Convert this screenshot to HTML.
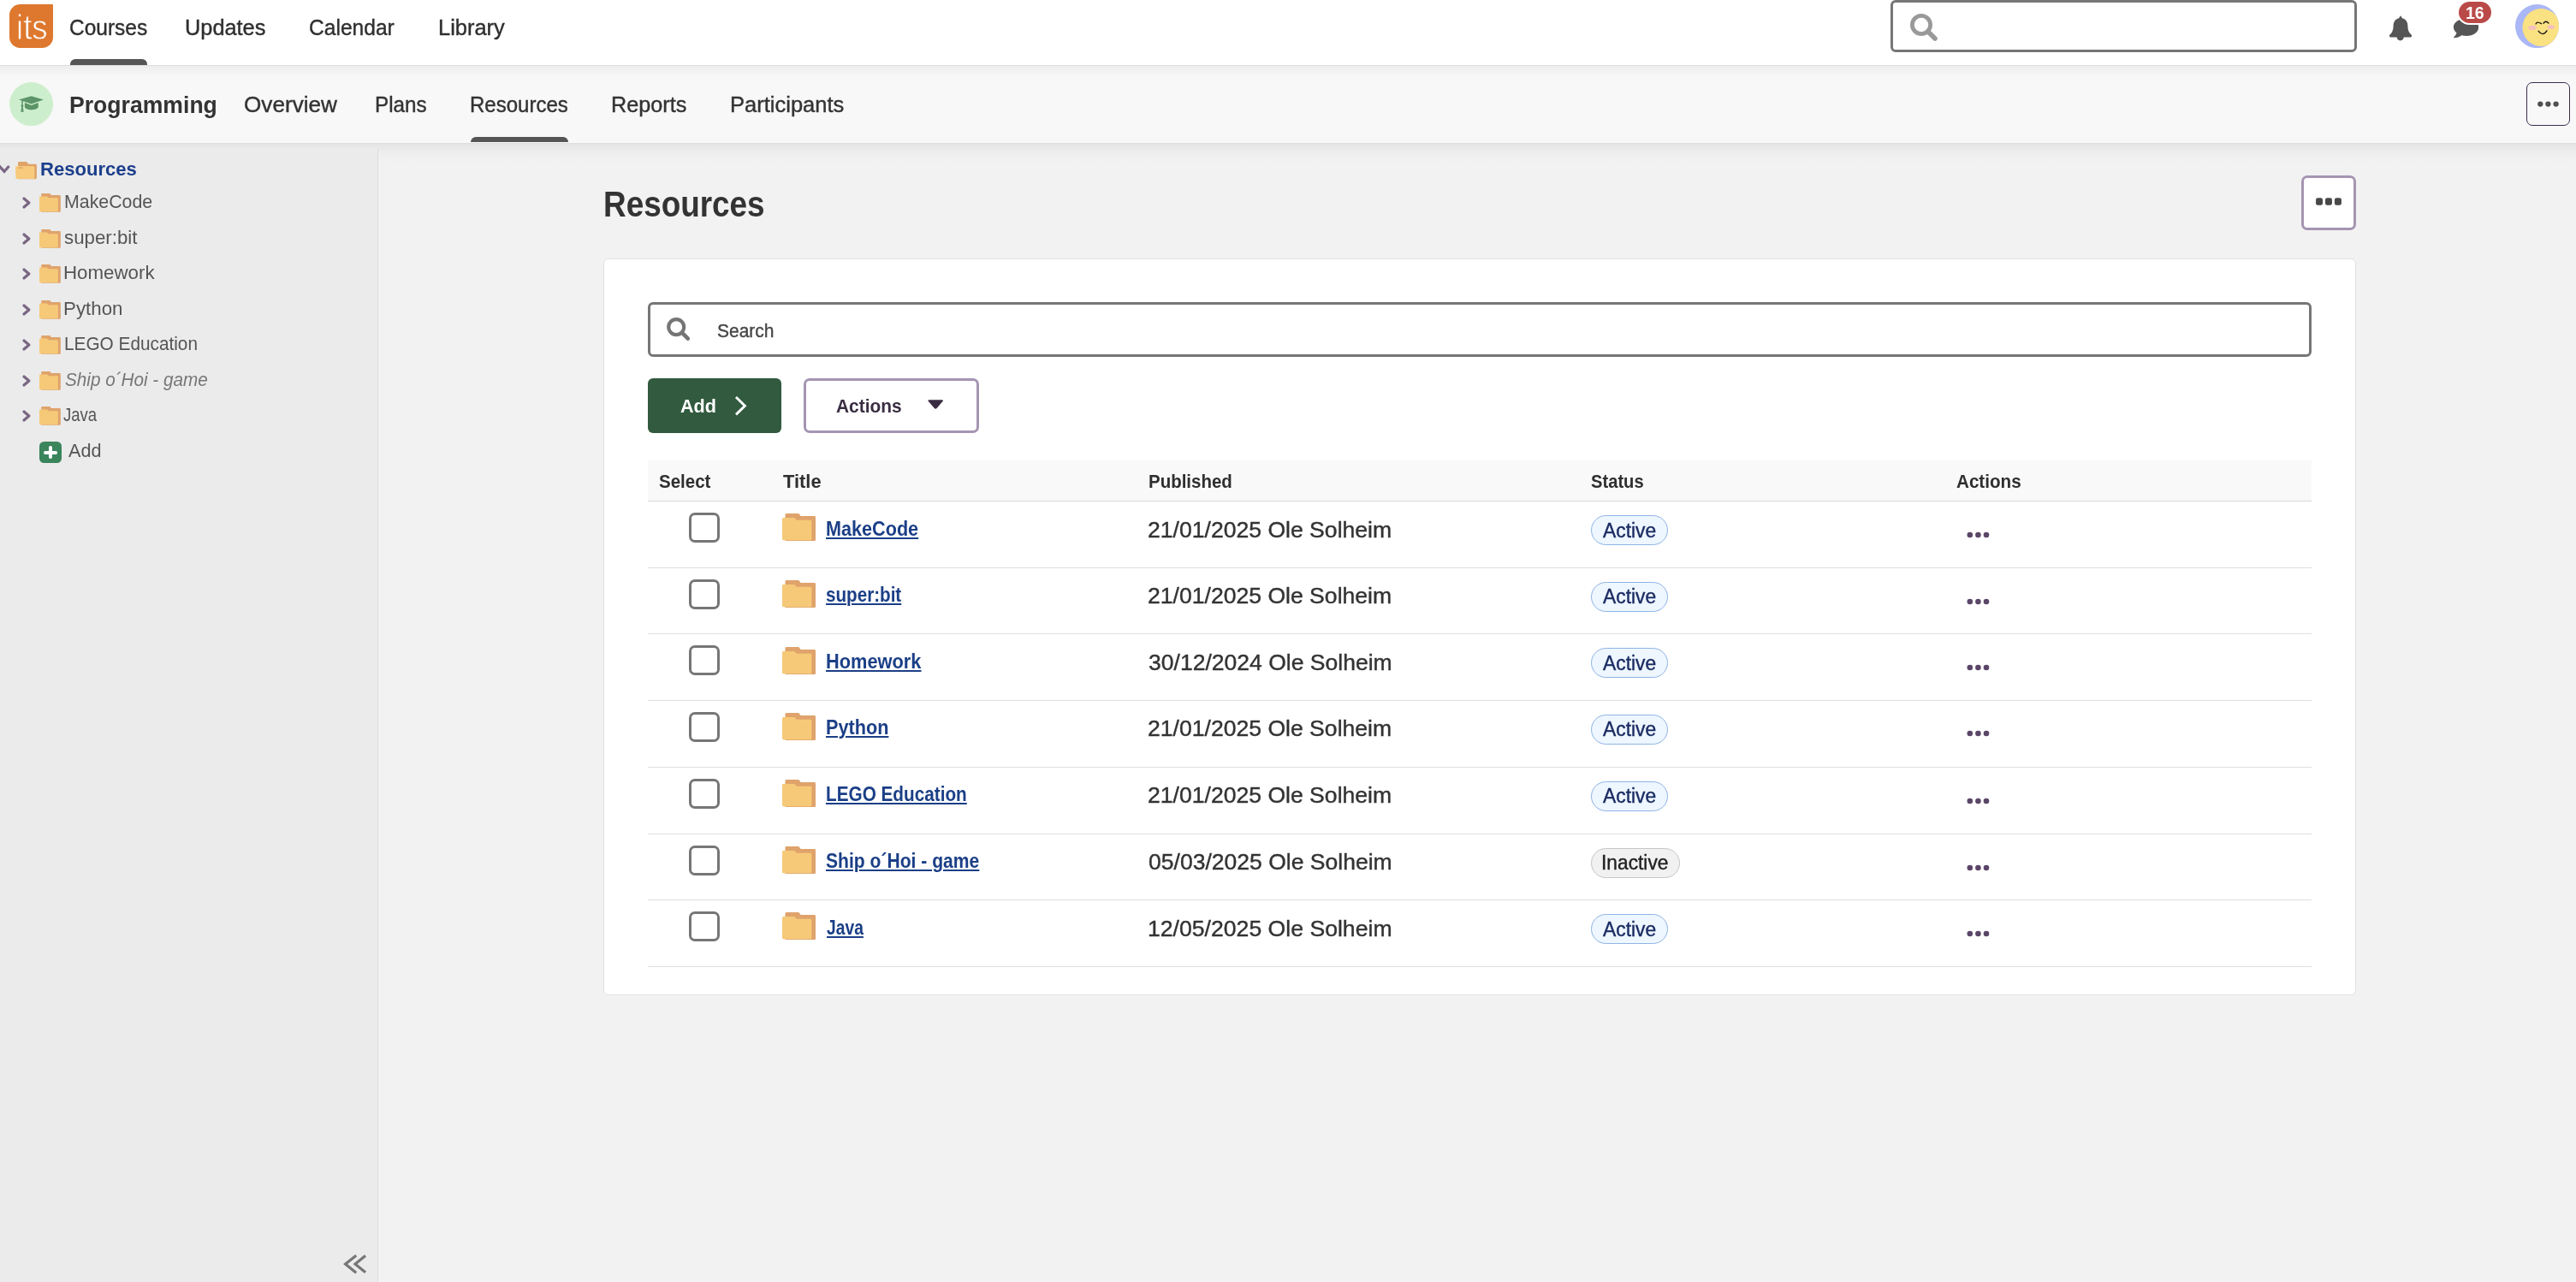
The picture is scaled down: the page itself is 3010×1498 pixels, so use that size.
<!DOCTYPE html>
<html lang="en"><head><meta charset="utf-8"><title>Resources - Programming</title>
<style>
html,body{margin:0;padding:0}
body{width:3010px;height:1498px;overflow:hidden;background:#f2f2f2;font-family:"Liberation Sans",sans-serif;position:relative}
.b{position:absolute;display:block;z-index:4}
.txt{position:absolute;left:0;top:0;width:3010px;height:1498px;z-index:7;will-change:transform}
.t{position:absolute;display:block;white-space:nowrap;line-height:1;transform-origin:0 50%;z-index:7;text-decoration:none}
.lnk{text-decoration:underline;text-decoration-thickness:2px;text-underline-offset:2px}
</style></head>
<body>
<div class="b" style="left:0px;top:0px;width:3010px;height:76px;background:#fff;z-index:1;"></div>
<div class="b" style="left:0px;top:76px;width:3010px;height:91px;background:linear-gradient(#ededed 0,#efefef 3px,#f3f3f3 8px,#f7f7f7 13px,#f8f8f8 17px,#f8f8f8 100%);z-index:2;"></div>
<div class="b" style="left:0px;top:167px;width:3010px;height:26px;background:linear-gradient(rgba(0,0,0,.1) 0,rgba(0,0,0,.06) 1px,rgba(0,0,0,.042) 5px,rgba(0,0,0,.025) 10px,rgba(0,0,0,.012) 15px,rgba(0,0,0,.004) 20px,rgba(0,0,0,0) 26px);z-index:2;"></div>
<div class="b" style="left:0px;top:76px;width:3010px;height:1px;background:#dcdcdc;z-index:3;"></div>
<div class="b" style="left:0px;top:172.7px;width:441px;height:1326px;background:#ebebeb;border-right:1px solid #dedede;z-index:3;"></div>
<div class="b" style="left:11px;top:5px;width:51px;height:50.6px;background:#de782e;border-radius:12.5px 1px 12.5px 12.5px;z-index:4;"></div>
<div class="b" style="left:82px;top:68.8px;width:90px;height:7.4px;background:#555;border-radius:6px 6px 0 0;z-index:4;"></div>
<div class="b" style="left:2209px;top:-0.5px;width:545px;height:61.5px;box-sizing:border-box;border:3px solid #767676;border-radius:6px;background:#fff;z-index:4;"></div>
<svg class="b" style="left:2230px;top:14px;z-index:5" width="38" height="38" viewBox="0 0 38 38"><circle cx="15" cy="15" r="10.6" fill="none" stroke="#999" stroke-width="4.8"/><path d="M23 23 L31 31" stroke="#999" stroke-width="5.6" stroke-linecap="round"/></svg>
<svg class="b" style="left:2791px;top:17.5px;z-index:5" width="28" height="30" viewBox="0 0 28 30"><path d="M14 0.3 L15.9 3.2 C20.2 4.2 22.4 7.8 22.4 12 C22.4 17.4 24 20.2 26.5 22.5 C27.6 23.6 26.9 25.6 25.4 25.6 H2.6 C1.1 25.6 0.4 23.6 1.5 22.5 C4 20.2 5.6 17.4 5.6 12 C5.6 7.8 7.8 4.2 12.1 3.2 Z" fill="#555"/><path d="M9.6 25 H17.8 C17.8 27.5 16 29.4 13.7 29.4 C11.4 29.4 9.6 27.5 9.6 25 Z" fill="#555"/></svg>
<svg class="b" style="left:2866px;top:21.2px;z-index:5" width="31" height="24.8" viewBox="0 0 31 24" preserveAspectRatio="none"><path d="M16 0.6 C24.3 0.6 30.2 4.9 30.2 10.4 C30.2 15.9 24.3 20.3 16 20.3 C14 20.3 12 20 10.3 19.5 C8 21.2 4.8 22.4 1.4 22.6 C0.9 22.6 0.8 22.1 1.2 21.7 C2.8 20.3 4 18.6 4.5 16.9 C2.4 15.2 0.9 12.9 0.9 10.4 C0.9 4.9 7.7 0.6 16 0.6 Z" fill="#555"/></svg>
<div class="b" style="left:2871px;top:0px;width:42px;height:29.3px;box-sizing:border-box;background:#b94a48;border:2px solid #fff;border-radius:15px;z-index:6;"></div>
<svg class="b" style="left:2939px;top:4.7px;z-index:5" width="51.2" height="51.2" viewBox="0 0 51.2 51.2"><defs><clipPath id="av"><circle cx="25.5" cy="25.6" r="25.5"/></clipPath></defs><circle cx="25.5" cy="25.6" r="25.5" fill="#aab7f6"/><g clip-path="url(#av)"><circle cx="30.5" cy="27.1" r="22" fill="#fae182"/><ellipse cx="20.05" cy="27.35" rx="4.8" ry="2.6" fill="#f5c0bd"/><ellipse cx="41.7" cy="26.65" rx="4.2" ry="2.4" fill="#f5c0bd"/><path d="M24.1 22.9 Q25.4 19.4 30.5 22.7" fill="none" stroke="#1a1a1a" stroke-width="1.4" stroke-linecap="round"/><path d="M33 22.2 Q35.8 18.4 38.9 22" fill="none" stroke="#1a1a1a" stroke-width="1.4" stroke-linecap="round"/><path d="M27.2 31.3 Q32.1 38.2 37 30.9" fill="none" stroke="#1a1a1a" stroke-width="1.4" stroke-linecap="round"/></g></svg>
<svg class="b" style="left:10.9px;top:95.8px;z-index:5" width="51.1" height="51.1" viewBox="0 0 51.1 51.1"><circle cx="25.55" cy="25.55" r="25.55" fill="#cdeecd"/><path d="M25.7 16.2 L39.9 20.45 L25.7 25.5 L11 20.45 Z" fill="#5c9468"/><path d="M17.9 23.9 L25.7 26.9 L33.6 23.9 L33.9 28.6 C33.9 30.8 30 32.4 25.7 32.4 C21.4 32.4 17.8 30.8 17.8 28.6 Z" fill="#5c9468"/><path d="M14.3 21.6 L15.9 22.1 L15.6 26.3 C16.2 26.6 16.4 27.1 16.4 27.6 C16.4 28.2 16.2 28.6 15.8 28.9 L16.7 34.8 H13.3 L14.2 28.9 C13.8 28.6 13.5 28.2 13.5 27.6 C13.5 27.1 13.7 26.6 14.2 26.3 Z" fill="#5c9468"/></svg>
<div class="b" style="left:550px;top:159.8px;width:114px;height:6.3px;background:#555;border-radius:6px 6px 0 0;z-index:4;"></div>
<div class="b" style="left:2952px;top:96px;width:51px;height:51px;box-sizing:border-box;border:1.3px solid #3c2e4a;border-radius:7px;background:#f8f8f8;z-index:4;"></div>
<svg class="b" style="left:2962px;top:116px;z-index:5" width="32" height="12" viewBox="0 0 32 12"><circle cx="6.3" cy="5.6" r="3.15" fill="#4f4f4f"/><circle cx="15.4" cy="5.6" r="3.15" fill="#4f4f4f"/><circle cx="24.6" cy="5.6" r="3.15" fill="#4f4f4f"/></svg>
<svg class="b" style="left:0;top:190px;overflow:visible" width="13" height="14" viewBox="0 0 13 14"><path d="M-1 3.9 L5 10.4 L10.6 3.9" fill="none" stroke="#7a6682" stroke-width="3.1" stroke-linejoin="miter"/></svg>
<svg class="b" style="left:18px;top:189.2px" width="25" height="20.4" viewBox="0 0 25 20.4"><path d="M3 1.4 Q3 0 4.4 0 H12.4 Q13.5 0 14 0.9 L15.2 2.8 H23.4 Q24.9 2.8 24.9 4.2 V18.8 Q24.9 20.2 23.4 20.2 H3 Z" fill="#dfa367"/><path d="M0 6.5 Q0 5 1.5 5 H20.9 Q22.4 5 22.4 6.5 V18.4 Q22.4 19.9 20.9 19.9 H1.9 Q0.6 19.9 0.5 18.4 Z" fill="#f7ca7c"/><rect x="3.3" y="6.6" width="5.5" height="1.2" rx="0.6" fill="#d9a066"/></svg>
<svg class="b" style="left:28.4px;top:231.6px;overflow:visible" width="5.9" height="10" viewBox="0 0 5.9 10"><path d="M0 0 L5.9 5.0 L0 10" fill="none" stroke="#7a6682" stroke-width="3.2" stroke-linejoin="round" stroke-linecap="round"/></svg>
<svg class="b" style="left:45.9px;top:225.8px" width="24.8" height="21.8" viewBox="0 0 39 32" preserveAspectRatio="none"><path d="M3.5 1.4 Q3.5 0 5 0 H18.5 Q19.6 0 20.2 0.9 L21.6 3.1 H37.6 Q39 3.1 39 4.5 V30.6 Q39 32 37.6 32 H3.5 Z" fill="#dfa36b"/><path d="M0 6.4 Q0 5 1.4 5 H13.6 Q14.6 5 15.2 5.8 L16.4 7.4 Q16.9 7.8 17.6 7.8 H33 Q34.4 7.8 34.4 9.2 V29.8 Q34.4 31.2 33 31.2 H1.4 Q0 31.2 0 29.8 Z" fill="#f6c978"/></svg>
<svg class="b" style="left:28.4px;top:273.6px;overflow:visible" width="5.9" height="10" viewBox="0 0 5.9 10"><path d="M0 0 L5.9 5.0 L0 10" fill="none" stroke="#7a6682" stroke-width="3.2" stroke-linejoin="round" stroke-linecap="round"/></svg>
<svg class="b" style="left:45.9px;top:267.8px" width="24.8" height="21.8" viewBox="0 0 39 32" preserveAspectRatio="none"><path d="M3.5 1.4 Q3.5 0 5 0 H18.5 Q19.6 0 20.2 0.9 L21.6 3.1 H37.6 Q39 3.1 39 4.5 V30.6 Q39 32 37.6 32 H3.5 Z" fill="#dfa36b"/><path d="M0 6.4 Q0 5 1.4 5 H13.6 Q14.6 5 15.2 5.8 L16.4 7.4 Q16.9 7.8 17.6 7.8 H33 Q34.4 7.8 34.4 9.2 V29.8 Q34.4 31.2 33 31.2 H1.4 Q0 31.2 0 29.8 Z" fill="#f6c978"/></svg>
<svg class="b" style="left:28.4px;top:314.85px;overflow:visible" width="5.9" height="10" viewBox="0 0 5.9 10"><path d="M0 0 L5.9 5.0 L0 10" fill="none" stroke="#7a6682" stroke-width="3.2" stroke-linejoin="round" stroke-linecap="round"/></svg>
<svg class="b" style="left:45.9px;top:309.05px" width="24.8" height="21.8" viewBox="0 0 39 32" preserveAspectRatio="none"><path d="M3.5 1.4 Q3.5 0 5 0 H18.5 Q19.6 0 20.2 0.9 L21.6 3.1 H37.6 Q39 3.1 39 4.5 V30.6 Q39 32 37.6 32 H3.5 Z" fill="#dfa36b"/><path d="M0 6.4 Q0 5 1.4 5 H13.6 Q14.6 5 15.2 5.8 L16.4 7.4 Q16.9 7.8 17.6 7.8 H33 Q34.4 7.8 34.4 9.2 V29.8 Q34.4 31.2 33 31.2 H1.4 Q0 31.2 0 29.8 Z" fill="#f6c978"/></svg>
<svg class="b" style="left:28.4px;top:356.6px;overflow:visible" width="5.9" height="10" viewBox="0 0 5.9 10"><path d="M0 0 L5.9 5.0 L0 10" fill="none" stroke="#7a6682" stroke-width="3.2" stroke-linejoin="round" stroke-linecap="round"/></svg>
<svg class="b" style="left:45.9px;top:350.8px" width="24.8" height="21.8" viewBox="0 0 39 32" preserveAspectRatio="none"><path d="M3.5 1.4 Q3.5 0 5 0 H18.5 Q19.6 0 20.2 0.9 L21.6 3.1 H37.6 Q39 3.1 39 4.5 V30.6 Q39 32 37.6 32 H3.5 Z" fill="#dfa36b"/><path d="M0 6.4 Q0 5 1.4 5 H13.6 Q14.6 5 15.2 5.8 L16.4 7.4 Q16.9 7.8 17.6 7.8 H33 Q34.4 7.8 34.4 9.2 V29.8 Q34.4 31.2 33 31.2 H1.4 Q0 31.2 0 29.8 Z" fill="#f6c978"/></svg>
<svg class="b" style="left:28.4px;top:397.85px;overflow:visible" width="5.9" height="10" viewBox="0 0 5.9 10"><path d="M0 0 L5.9 5.0 L0 10" fill="none" stroke="#7a6682" stroke-width="3.2" stroke-linejoin="round" stroke-linecap="round"/></svg>
<svg class="b" style="left:45.9px;top:392.05px" width="24.8" height="21.8" viewBox="0 0 39 32" preserveAspectRatio="none"><path d="M3.5 1.4 Q3.5 0 5 0 H18.5 Q19.6 0 20.2 0.9 L21.6 3.1 H37.6 Q39 3.1 39 4.5 V30.6 Q39 32 37.6 32 H3.5 Z" fill="#dfa36b"/><path d="M0 6.4 Q0 5 1.4 5 H13.6 Q14.6 5 15.2 5.8 L16.4 7.4 Q16.9 7.8 17.6 7.8 H33 Q34.4 7.8 34.4 9.2 V29.8 Q34.4 31.2 33 31.2 H1.4 Q0 31.2 0 29.8 Z" fill="#f6c978"/></svg>
<svg class="b" style="left:28.4px;top:439.6px;overflow:visible" width="5.9" height="10" viewBox="0 0 5.9 10"><path d="M0 0 L5.9 5.0 L0 10" fill="none" stroke="#7a6682" stroke-width="3.2" stroke-linejoin="round" stroke-linecap="round"/></svg>
<svg class="b" style="left:45.9px;top:433.8px" width="24.8" height="21.8" viewBox="0 0 39 32" preserveAspectRatio="none"><path d="M3.5 1.4 Q3.5 0 5 0 H18.5 Q19.6 0 20.2 0.9 L21.6 3.1 H37.6 Q39 3.1 39 4.5 V30.6 Q39 32 37.6 32 H3.5 Z" fill="#dfa36b"/><path d="M0 6.4 Q0 5 1.4 5 H13.6 Q14.6 5 15.2 5.8 L16.4 7.4 Q16.9 7.8 17.6 7.8 H33 Q34.4 7.8 34.4 9.2 V29.8 Q34.4 31.2 33 31.2 H1.4 Q0 31.2 0 29.8 Z" fill="#f6c978"/></svg>
<svg class="b" style="left:28.4px;top:481.1px;overflow:visible" width="5.9" height="10" viewBox="0 0 5.9 10"><path d="M0 0 L5.9 5.0 L0 10" fill="none" stroke="#7a6682" stroke-width="3.2" stroke-linejoin="round" stroke-linecap="round"/></svg>
<svg class="b" style="left:45.9px;top:475.3px" width="24.8" height="21.8" viewBox="0 0 39 32" preserveAspectRatio="none"><path d="M3.5 1.4 Q3.5 0 5 0 H18.5 Q19.6 0 20.2 0.9 L21.6 3.1 H37.6 Q39 3.1 39 4.5 V30.6 Q39 32 37.6 32 H3.5 Z" fill="#dfa36b"/><path d="M0 6.4 Q0 5 1.4 5 H13.6 Q14.6 5 15.2 5.8 L16.4 7.4 Q16.9 7.8 17.6 7.8 H33 Q34.4 7.8 34.4 9.2 V29.8 Q34.4 31.2 33 31.2 H1.4 Q0 31.2 0 29.8 Z" fill="#f6c978"/></svg>
<div class="b" style="left:45.9px;top:515.85px;width:26.2px;height:25.25px;background:#3a855c;border-radius:5.5px;"></div>
<div class="b" style="left:51.1px;top:526.5px;width:15.9px;height:4.3px;background:#fff;border-radius:2px;"></div>
<div class="b" style="left:57.15px;top:520.8px;width:3.8px;height:15.3px;background:#fff;border-radius:1.9px;"></div>
<svg class="b" style="left:400px;top:1464px;overflow:visible" width="30" height="26" viewBox="0 0 30 26"><path d="M16.2 3 L3.6 13 L16.2 23.2 M27 3.2 L15 13 L27 22.8" fill="none" stroke="#767676" stroke-width="3.2"/></svg>
<div class="b" style="left:2689px;top:205px;width:64px;height:64px;box-sizing:border-box;border:3px solid #a594b2;border-radius:7px;background:#fff;"></div>
<svg class="b" style="left:2700px;top:228px" width="42" height="16" viewBox="0 0 42 16"><rect x="6.05" y="3.3" width="7.95" height="8.5" rx="2.2" fill="#484848"/><rect x="17" y="3.3" width="7.95" height="8.5" rx="2.2" fill="#484848"/><rect x="27.9" y="3.3" width="8" height="8.5" rx="2.2" fill="#484848"/></svg>
<div class="b" style="left:705px;top:301.5px;width:2047.5px;height:861.5px;box-sizing:border-box;border:1px solid #e2e2e2;border-radius:6px;background:#fff;"></div>
<div class="b" style="left:757px;top:353px;width:1943.5px;height:64px;box-sizing:border-box;border:3px solid #767676;border-radius:6px;background:#fff;"></div>
<svg class="b" style="left:778px;top:370px" width="30" height="30" viewBox="0 0 30 30"><circle cx="12.2" cy="12.1" r="9" fill="none" stroke="#757575" stroke-width="4.1"/><path d="M18.8 18.7 L25.8 25.7" stroke="#757575" stroke-width="4.7" stroke-linecap="round"/></svg>
<div class="b" style="left:757px;top:442px;width:156px;height:64px;background:#325a3f;border-radius:6px;"></div>
<svg class="b" style="left:858px;top:463px;overflow:visible" width="16" height="22" viewBox="0 0 16 22"><path d="M2 1 L12.4 11.2 L2 21.4" fill="none" stroke="#fff" stroke-width="2.9"/></svg>
<div class="b" style="left:939.3px;top:442.4px;width:204.4px;height:63.6px;box-sizing:border-box;border:3px solid #a594b2;border-radius:7px;background:#fff;"></div>
<svg class="b" style="left:1083px;top:466px" width="21" height="13" viewBox="0 0 21 13"><path d="M2.6 1.2 H17.8 Q20 1.2 18.5 2.9 L11.6 11 Q10.2 12.6 8.8 11 L1.9 2.9 Q0.4 1.2 2.6 1.2 Z" fill="#3a2d42"/></svg>
<div class="b" style="left:757px;top:538px;width:1944px;height:47.5px;background:#f9f9f9;"></div>
<div class="b" style="left:757px;top:585px;width:1944px;height:1.25px;background:#d8d8d8;"></div>
<div class="b" style="left:757px;top:663px;width:1944px;height:1.25px;background:#dfdfdf;"></div>
<div class="b" style="left:757px;top:740px;width:1944px;height:1.25px;background:#dfdfdf;"></div>
<div class="b" style="left:757px;top:818px;width:1944px;height:1.25px;background:#dfdfdf;"></div>
<div class="b" style="left:757px;top:896px;width:1944px;height:1.25px;background:#dfdfdf;"></div>
<div class="b" style="left:757px;top:974px;width:1944px;height:1.25px;background:#dfdfdf;"></div>
<div class="b" style="left:757px;top:1051px;width:1944px;height:1.25px;background:#dfdfdf;"></div>
<div class="b" style="left:757px;top:1129px;width:1944px;height:1.25px;background:#dfdfdf;"></div>
<div class="b" style="left:805px;top:599.1px;width:36px;height:35px;box-sizing:border-box;border:3px solid #767676;border-radius:7px;background:#fff;"></div>
<svg class="b" style="left:914px;top:600.3px" width="39" height="32.1" viewBox="0 0 39 32" preserveAspectRatio="none"><path d="M3.5 1.4 Q3.5 0 5 0 H18.5 Q19.6 0 20.2 0.9 L21.6 3.1 H37.6 Q39 3.1 39 4.5 V30.6 Q39 32 37.6 32 H3.5 Z" fill="#dfa36b"/><path d="M0 6.4 Q0 5 1.4 5 H13.6 Q14.6 5 15.2 5.8 L16.4 7.4 Q16.9 7.8 17.6 7.8 H33 Q34.4 7.8 34.4 9.2 V29.8 Q34.4 31.2 33 31.2 H1.4 Q0 31.2 0 29.8 Z" fill="#f6c978"/></svg>
<div class="b" style="left:1859.25px;top:602.0px;width:89.25px;height:35px;box-sizing:border-box;border:1.2px solid #8eb4e6;border-radius:17.5px;background:#eef6ff;"></div>
<svg class="b" style="left:2296px;top:618.6px" width="32" height="12" viewBox="0 0 32 12"><circle cx="5.8" cy="6" r="3.3" fill="#5b4668"/><circle cx="15.4" cy="6" r="3.3" fill="#5b4668"/><circle cx="25" cy="6" r="3.3" fill="#5b4668"/></svg>
<div class="b" style="left:805px;top:677.1px;width:36px;height:35px;box-sizing:border-box;border:3px solid #767676;border-radius:7px;background:#fff;"></div>
<svg class="b" style="left:914px;top:678.3px" width="39" height="32.1" viewBox="0 0 39 32" preserveAspectRatio="none"><path d="M3.5 1.4 Q3.5 0 5 0 H18.5 Q19.6 0 20.2 0.9 L21.6 3.1 H37.6 Q39 3.1 39 4.5 V30.6 Q39 32 37.6 32 H3.5 Z" fill="#dfa36b"/><path d="M0 6.4 Q0 5 1.4 5 H13.6 Q14.6 5 15.2 5.8 L16.4 7.4 Q16.9 7.8 17.6 7.8 H33 Q34.4 7.8 34.4 9.2 V29.8 Q34.4 31.2 33 31.2 H1.4 Q0 31.2 0 29.8 Z" fill="#f6c978"/></svg>
<div class="b" style="left:1859.25px;top:680.0px;width:89.25px;height:35px;box-sizing:border-box;border:1.2px solid #8eb4e6;border-radius:17.5px;background:#eef6ff;"></div>
<svg class="b" style="left:2296px;top:696.6px" width="32" height="12" viewBox="0 0 32 12"><circle cx="5.8" cy="6" r="3.3" fill="#5b4668"/><circle cx="15.4" cy="6" r="3.3" fill="#5b4668"/><circle cx="25" cy="6" r="3.3" fill="#5b4668"/></svg>
<div class="b" style="left:805px;top:754.35px;width:36px;height:35px;box-sizing:border-box;border:3px solid #767676;border-radius:7px;background:#fff;"></div>
<svg class="b" style="left:914px;top:755.55px" width="39" height="32.1" viewBox="0 0 39 32" preserveAspectRatio="none"><path d="M3.5 1.4 Q3.5 0 5 0 H18.5 Q19.6 0 20.2 0.9 L21.6 3.1 H37.6 Q39 3.1 39 4.5 V30.6 Q39 32 37.6 32 H3.5 Z" fill="#dfa36b"/><path d="M0 6.4 Q0 5 1.4 5 H13.6 Q14.6 5 15.2 5.8 L16.4 7.4 Q16.9 7.8 17.6 7.8 H33 Q34.4 7.8 34.4 9.2 V29.8 Q34.4 31.2 33 31.2 H1.4 Q0 31.2 0 29.8 Z" fill="#f6c978"/></svg>
<div class="b" style="left:1859.25px;top:757.25px;width:89.25px;height:35px;box-sizing:border-box;border:1.2px solid #8eb4e6;border-radius:17.5px;background:#eef6ff;"></div>
<svg class="b" style="left:2296px;top:773.85px" width="32" height="12" viewBox="0 0 32 12"><circle cx="5.8" cy="6" r="3.3" fill="#5b4668"/><circle cx="15.4" cy="6" r="3.3" fill="#5b4668"/><circle cx="25" cy="6" r="3.3" fill="#5b4668"/></svg>
<div class="b" style="left:805px;top:831.85px;width:36px;height:35px;box-sizing:border-box;border:3px solid #767676;border-radius:7px;background:#fff;"></div>
<svg class="b" style="left:914px;top:833.05px" width="39" height="32.1" viewBox="0 0 39 32" preserveAspectRatio="none"><path d="M3.5 1.4 Q3.5 0 5 0 H18.5 Q19.6 0 20.2 0.9 L21.6 3.1 H37.6 Q39 3.1 39 4.5 V30.6 Q39 32 37.6 32 H3.5 Z" fill="#dfa36b"/><path d="M0 6.4 Q0 5 1.4 5 H13.6 Q14.6 5 15.2 5.8 L16.4 7.4 Q16.9 7.8 17.6 7.8 H33 Q34.4 7.8 34.4 9.2 V29.8 Q34.4 31.2 33 31.2 H1.4 Q0 31.2 0 29.8 Z" fill="#f6c978"/></svg>
<div class="b" style="left:1859.25px;top:834.75px;width:89.25px;height:35px;box-sizing:border-box;border:1.2px solid #8eb4e6;border-radius:17.5px;background:#eef6ff;"></div>
<svg class="b" style="left:2296px;top:851.35px" width="32" height="12" viewBox="0 0 32 12"><circle cx="5.8" cy="6" r="3.3" fill="#5b4668"/><circle cx="15.4" cy="6" r="3.3" fill="#5b4668"/><circle cx="25" cy="6" r="3.3" fill="#5b4668"/></svg>
<div class="b" style="left:805px;top:910.1px;width:36px;height:35px;box-sizing:border-box;border:3px solid #767676;border-radius:7px;background:#fff;"></div>
<svg class="b" style="left:914px;top:911.3px" width="39" height="32.1" viewBox="0 0 39 32" preserveAspectRatio="none"><path d="M3.5 1.4 Q3.5 0 5 0 H18.5 Q19.6 0 20.2 0.9 L21.6 3.1 H37.6 Q39 3.1 39 4.5 V30.6 Q39 32 37.6 32 H3.5 Z" fill="#dfa36b"/><path d="M0 6.4 Q0 5 1.4 5 H13.6 Q14.6 5 15.2 5.8 L16.4 7.4 Q16.9 7.8 17.6 7.8 H33 Q34.4 7.8 34.4 9.2 V29.8 Q34.4 31.2 33 31.2 H1.4 Q0 31.2 0 29.8 Z" fill="#f6c978"/></svg>
<div class="b" style="left:1859.25px;top:913.0px;width:89.25px;height:35px;box-sizing:border-box;border:1.2px solid #8eb4e6;border-radius:17.5px;background:#eef6ff;"></div>
<svg class="b" style="left:2296px;top:929.6px" width="32" height="12" viewBox="0 0 32 12"><circle cx="5.8" cy="6" r="3.3" fill="#5b4668"/><circle cx="15.4" cy="6" r="3.3" fill="#5b4668"/><circle cx="25" cy="6" r="3.3" fill="#5b4668"/></svg>
<div class="b" style="left:805px;top:988.1px;width:36px;height:35px;box-sizing:border-box;border:3px solid #767676;border-radius:7px;background:#fff;"></div>
<svg class="b" style="left:914px;top:989.3px" width="39" height="32.1" viewBox="0 0 39 32" preserveAspectRatio="none"><path d="M3.5 1.4 Q3.5 0 5 0 H18.5 Q19.6 0 20.2 0.9 L21.6 3.1 H37.6 Q39 3.1 39 4.5 V30.6 Q39 32 37.6 32 H3.5 Z" fill="#dfa36b"/><path d="M0 6.4 Q0 5 1.4 5 H13.6 Q14.6 5 15.2 5.8 L16.4 7.4 Q16.9 7.8 17.6 7.8 H33 Q34.4 7.8 34.4 9.2 V29.8 Q34.4 31.2 33 31.2 H1.4 Q0 31.2 0 29.8 Z" fill="#f6c978"/></svg>
<div class="b" style="left:1859.25px;top:991.0px;width:103.25px;height:35px;box-sizing:border-box;border:1.2px solid #c6c6c6;border-radius:17.5px;background:#f1f1f1;"></div>
<svg class="b" style="left:2296px;top:1007.6px" width="32" height="12" viewBox="0 0 32 12"><circle cx="5.8" cy="6" r="3.3" fill="#5b4668"/><circle cx="15.4" cy="6" r="3.3" fill="#5b4668"/><circle cx="25" cy="6" r="3.3" fill="#5b4668"/></svg>
<div class="b" style="left:805px;top:1065.1px;width:36px;height:35px;box-sizing:border-box;border:3px solid #767676;border-radius:7px;background:#fff;"></div>
<svg class="b" style="left:914px;top:1066.3px" width="39" height="32.1" viewBox="0 0 39 32" preserveAspectRatio="none"><path d="M3.5 1.4 Q3.5 0 5 0 H18.5 Q19.6 0 20.2 0.9 L21.6 3.1 H37.6 Q39 3.1 39 4.5 V30.6 Q39 32 37.6 32 H3.5 Z" fill="#dfa36b"/><path d="M0 6.4 Q0 5 1.4 5 H13.6 Q14.6 5 15.2 5.8 L16.4 7.4 Q16.9 7.8 17.6 7.8 H33 Q34.4 7.8 34.4 9.2 V29.8 Q34.4 31.2 33 31.2 H1.4 Q0 31.2 0 29.8 Z" fill="#f6c978"/></svg>
<div class="b" style="left:1859.25px;top:1068.0px;width:89.25px;height:35px;box-sizing:border-box;border:1.2px solid #8eb4e6;border-radius:17.5px;background:#eef6ff;"></div>
<svg class="b" style="left:2296px;top:1084.6px" width="32" height="12" viewBox="0 0 32 12"><circle cx="5.8" cy="6" r="3.3" fill="#5b4668"/><circle cx="15.4" cy="6" r="3.3" fill="#5b4668"/><circle cx="25" cy="6" r="3.3" fill="#5b4668"/></svg>
<div class="txt">
<span class="t" style="left:81.10px;top:20.00px;font-size:25.5px;color:#2f2f2f;transform:scaleX(0.9601);-webkit-text-stroke:0.4px currentColor;">Courses</span>
<span class="t" style="left:216.42px;top:20.00px;font-size:25.5px;color:#2f2f2f;transform:scaleX(0.9937);-webkit-text-stroke:0.4px currentColor;">Updates</span>
<span class="t" style="left:361.35px;top:20.00px;font-size:25.5px;color:#2f2f2f;transform:scaleX(0.9642);-webkit-text-stroke:0.4px currentColor;">Calendar</span>
<span class="t" style="left:512.26px;top:20.00px;font-size:25.5px;color:#2f2f2f;transform:scaleX(0.9973);-webkit-text-stroke:0.4px currentColor;">Library</span>
<span class="t" style="left:18.50px;top:12.00px;font-size:41px;color:#fff;transform:scaleX(0.8962);-webkit-text-stroke:0.8px #de782e;">its</span>
<span class="t" style="left:2881.08px;top:5.00px;font-size:20.5px;color:#fff;transform:scaleX(0.9519);font-weight:700;">16</span>
<span class="t" style="left:81.34px;top:109.00px;font-size:27.5px;color:#333;transform:scaleX(0.9669);font-weight:700;">Programming</span>
<span class="t" style="left:284.53px;top:110.00px;font-size:25px;color:#333;transform:scaleX(1.0453);-webkit-text-stroke:0.4px currentColor;">Overview</span>
<span class="t" style="left:438.11px;top:110.00px;font-size:25px;color:#333;transform:scaleX(0.9699);-webkit-text-stroke:0.4px currentColor;">Plans</span>
<span class="t" style="left:548.87px;top:110.00px;font-size:25px;color:#333;transform:scaleX(0.9614);-webkit-text-stroke:0.4px currentColor;">Resources</span>
<span class="t" style="left:713.78px;top:110.00px;font-size:25px;color:#333;transform:scaleX(1.0082);-webkit-text-stroke:0.4px currentColor;">Reports</span>
<span class="t" style="left:852.51px;top:110.00px;font-size:25px;color:#333;transform:scaleX(1.0205);-webkit-text-stroke:0.4px currentColor;">Participants</span>
<span class="t" style="left:46.92px;top:187.00px;font-size:22.3px;color:#1c3f8c;transform:scaleX(0.9898);font-weight:700;">Resources</span>
<span class="t" style="left:74.58px;top:225.00px;font-size:21.2px;color:#555;transform:scaleX(1.0074);">MakeCode</span>
<span class="t" style="left:75.40px;top:267.00px;font-size:21.2px;color:#555;transform:scaleX(1.0518);">super:bit</span>
<span class="t" style="left:74.26px;top:308.00px;font-size:21.2px;color:#555;transform:scaleX(1.0527);">Homework</span>
<span class="t" style="left:74.26px;top:350.00px;font-size:21.2px;color:#555;transform:scaleX(1.0530);">Python</span>
<span class="t" style="left:74.63px;top:391.00px;font-size:21.2px;color:#555;transform:scaleX(0.9808);">LEGO Education</span>
<span class="t" style="left:75.68px;top:433.00px;font-size:21.2px;color:#777;transform:scaleX(0.9765);font-style:italic;">Ship o´Hoi - game</span>
<span class="t" style="left:74.46px;top:474.00px;font-size:21.2px;color:#555;transform:scaleX(0.8747);">Java</span>
<span class="t" style="left:80.20px;top:516.00px;font-size:21.2px;color:#555;transform:scaleX(1.0183);">Add</span>
<span class="t" style="left:705.09px;top:218.00px;font-size:42.5px;color:#333;transform:scaleX(0.8678);font-weight:700;">Resources</span>
<span class="t" style="left:838.14px;top:377.00px;font-size:21.3px;color:#484848;transform:scaleX(0.9844);-webkit-text-stroke:0.4px currentColor;">Search</span>
<span class="t" style="left:795.16px;top:463.00px;font-size:22.75px;color:#fff;transform:scaleX(0.9490);font-weight:700;">Add</span>
<span class="t" style="left:976.67px;top:463.00px;font-size:22.75px;color:#3a2d42;transform:scaleX(0.9191);font-weight:700;">Actions</span>
<span class="t" style="left:770.18px;top:551.00px;font-size:22.75px;color:#2f2f2f;transform:scaleX(0.9014);font-weight:700;">Select</span>
<span class="t" style="left:914.75px;top:551.00px;font-size:22.75px;color:#2f2f2f;transform:scaleX(0.9609);font-weight:700;">Title</span>
<span class="t" style="left:1341.72px;top:551.00px;font-size:22.75px;color:#2f2f2f;transform:scaleX(0.9000);font-weight:700;">Published</span>
<span class="t" style="left:1859.18px;top:551.00px;font-size:22.75px;color:#2f2f2f;transform:scaleX(0.8864);font-weight:700;">Status</span>
<span class="t" style="left:2286.43px;top:551.00px;font-size:22.75px;color:#2f2f2f;transform:scaleX(0.9069);font-weight:700;">Actions</span>
<a class="t lnk" style="left:964.90px;top:607.00px;font-size:23.3px;color:#1b3f87;transform:scaleX(0.9280);font-weight:700;">MakeCode</a>
<span class="t" style="left:1341.25px;top:606.00px;font-size:26px;color:#333;transform:scaleX(1.0221);-webkit-text-stroke:0.4px currentColor;">21/01/2025 Ole Solheim</span>
<span class="t" style="left:1873.25px;top:609.00px;font-size:23.3px;color:#1b2c63;transform:scaleX(0.9799);-webkit-text-stroke:0.4px currentColor;">Active</span>
<a class="t lnk" style="left:965.11px;top:684.00px;font-size:23.3px;color:#1b3f87;transform:scaleX(0.8853);font-weight:700;">super:bit</a>
<span class="t" style="left:1341.25px;top:683.00px;font-size:26px;color:#333;transform:scaleX(1.0221);-webkit-text-stroke:0.4px currentColor;">21/01/2025 Ole Solheim</span>
<span class="t" style="left:1873.25px;top:686.00px;font-size:23.3px;color:#1b2c63;transform:scaleX(0.9799);-webkit-text-stroke:0.4px currentColor;">Active</span>
<a class="t lnk" style="left:964.89px;top:762.00px;font-size:23.3px;color:#1b3f87;transform:scaleX(0.9358);font-weight:700;">Homework</a>
<span class="t" style="left:1341.67px;top:761.00px;font-size:26px;color:#333;transform:scaleX(1.0206);-webkit-text-stroke:0.4px currentColor;">30/12/2024 Ole Solheim</span>
<span class="t" style="left:1873.25px;top:764.00px;font-size:23.3px;color:#1b2c63;transform:scaleX(0.9799);-webkit-text-stroke:0.4px currentColor;">Active</span>
<a class="t lnk" style="left:964.90px;top:839.00px;font-size:23.3px;color:#1b3f87;transform:scaleX(0.9296);font-weight:700;">Python</a>
<span class="t" style="left:1341.25px;top:838.00px;font-size:26px;color:#333;transform:scaleX(1.0221);-webkit-text-stroke:0.4px currentColor;">21/01/2025 Ole Solheim</span>
<span class="t" style="left:1873.25px;top:841.00px;font-size:23.3px;color:#1b2c63;transform:scaleX(0.9799);-webkit-text-stroke:0.4px currentColor;">Active</span>
<a class="t lnk" style="left:964.95px;top:917.00px;font-size:23.3px;color:#1b3f87;transform:scaleX(0.8903);font-weight:700;">LEGO Education</a>
<span class="t" style="left:1341.25px;top:916.00px;font-size:26px;color:#333;transform:scaleX(1.0221);-webkit-text-stroke:0.4px currentColor;">21/01/2025 Ole Solheim</span>
<span class="t" style="left:1873.25px;top:919.00px;font-size:23.3px;color:#1b2c63;transform:scaleX(0.9799);-webkit-text-stroke:0.4px currentColor;">Active</span>
<a class="t lnk" style="left:965.42px;top:995.00px;font-size:23.3px;color:#1b3f87;transform:scaleX(0.9056);font-weight:700;">Ship o´Hoi - game</a>
<span class="t" style="left:1341.67px;top:994.00px;font-size:26px;color:#333;transform:scaleX(1.0206);-webkit-text-stroke:0.4px currentColor;">05/03/2025 Ole Solheim</span>
<span class="t" style="left:1871.47px;top:997.00px;font-size:23.3px;color:#222;transform:scaleX(0.9770);-webkit-text-stroke:0.4px currentColor;">Inactive</span>
<a class="t lnk" style="left:965.75px;top:1073.00px;font-size:23.3px;color:#1b3f87;transform:scaleX(0.8272);font-weight:700;">Java</a>
<span class="t" style="left:1340.84px;top:1072.00px;font-size:26px;color:#333;transform:scaleX(1.0236);-webkit-text-stroke:0.4px currentColor;">12/05/2025 Ole Solheim</span>
<span class="t" style="left:1873.25px;top:1075.00px;font-size:23.3px;color:#1b2c63;transform:scaleX(0.9799);-webkit-text-stroke:0.4px currentColor;">Active</span>
</div>
</body></html>
